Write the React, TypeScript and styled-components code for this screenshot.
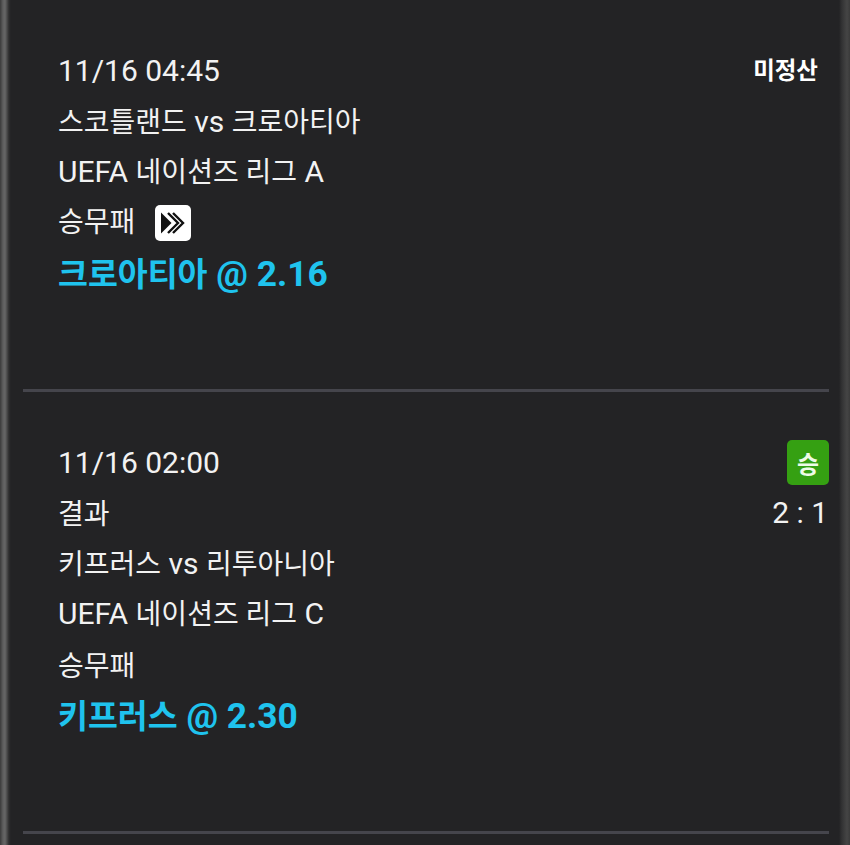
import React from "react";
import styled, { createGlobalStyle } from "styled-components";

const GlobalStyle = createGlobalStyle`
  html, body {
    margin: 0;
    padding: 0;
    background: #232325;
    overflow: hidden;
  }
`;

const Frame = styled.div`
  width: 850px;
  height: 845px;
  box-sizing: border-box;
  overflow: hidden;
  padding: 0 21px 0 23px;
  background:
    linear-gradient(90deg, #3a3a3a 0, #5e5e5e 3px, #666 5px, #4a4a4a 7px, #2c2c2d 9px, #232325 11px, #232325 100%);
  position: relative;
  font-family: Roboto, "Noto Sans CJK KR", sans-serif;
  color: #f2f2f2;

  &::after {
    content: "";
    position: absolute;
    top: 0;
    right: 0;
    bottom: 0;
    width: 11px;
    background: linear-gradient(90deg, #232325 0, #333334 3px, #454545 8px, #3a3a3a 100%);
  }
`;

const Bet = styled.section`
  display: grid;
  grid-template-columns: 1fr auto;
  padding: 46px 0 90px 35px;
  border-bottom: 3px solid #45454c;
`;

const Lines = styled.div`
  display: flex;
  flex-direction: column;
`;

const Line = styled.div`
  height: 50.5px;
  line-height: 50px;
  font-size: 28px;
  white-space: pre;
`;

// hangul-only lines sit a little lower without latin text on the baseline
const PlainLine = styled(Line)`
  line-height: 53px;
`;

// the hangul runs smaller than the latin text in the original
const Latin = styled.span`
  font-size: 30px;
`;

const Pick = styled(Line)`
  line-height: 53px;
  font-size: 32.5px;
  font-weight: 700;
  color: #1fc3ee;

  ${Latin} {
    font-size: 35.3px;
  }
`;

const Status = styled.div`
  display: flex;
  flex-direction: column;
  align-items: flex-end;
`;

const Unsettled = styled.div`
  height: 50px;
  line-height: 50px;
  padding-right: 11px;
  font-size: 23.5px;
  font-weight: 700;
  color: #fff;
`;

const WinBadge = styled.div`
  display: flex;
  align-items: center;
  justify-content: center;
  width: 42px;
  height: 45px;
  margin-top: 2px;
  border-radius: 5px;
  background: #35a012;
  font-size: 24px;
  font-weight: 700;
  color: #eefbe6;
`;

const Score = styled.div`
  padding: 6px 1px 0 0;
  font-size: 30px;
  line-height: 44px;
`;

const LiveIcon = styled.span`
  display: inline-flex;
  align-items: center;
  justify-content: center;
  width: 36px;
  height: 36px;
  margin-left: 20px;
  border-radius: 5px;
  background: #fff;
  vertical-align: -3px;
`;

const Arrows = () => (
  <svg width="28" height="24" viewBox="0 0 28 24" fill="none">
    <path d="M2 1.5 L12.5 12 L2 22.5 Z" fill="#111" />
    <path d="M9 2 L19 12 L9 22" stroke="#111" strokeWidth="2.4" />
    <path d="M14 2 L24 12 L14 22" stroke="#111" strokeWidth="2.4" />
  </svg>
);

export default function App() {
  return (
    <Frame>
      <GlobalStyle />
      <Bet>
        <Lines>
          <Line><Latin>11/16 04:45</Latin></Line>
          <Line>스코틀랜드<Latin> vs </Latin>크로아티아</Line>
          <Line><Latin>UEFA </Latin>네이션즈 리그<Latin> A</Latin></Line>
          <Line>
            승무패
            <LiveIcon>
              <Arrows />
            </LiveIcon>
          </Line>
          <Pick>크로아티아<Latin> @ 2.16</Latin></Pick>
        </Lines>
        <Status>
          <Unsettled>미정산</Unsettled>
        </Status>
      </Bet>
      <Bet>
        <Lines>
          <Line><Latin>11/16 02:00</Latin></Line>
          <PlainLine>결과</PlainLine>
          <Line>키프러스<Latin> vs </Latin>리투아니아</Line>
          <Line><Latin>UEFA </Latin>네이션즈 리그<Latin> C</Latin></Line>
          <PlainLine>승무패</PlainLine>
          <Pick>키프러스<Latin> @ 2.30</Latin></Pick>
        </Lines>
        <Status>
          <WinBadge>승</WinBadge>
          <Score>2 : 1</Score>
        </Status>
      </Bet>
    </Frame>
  );
}
